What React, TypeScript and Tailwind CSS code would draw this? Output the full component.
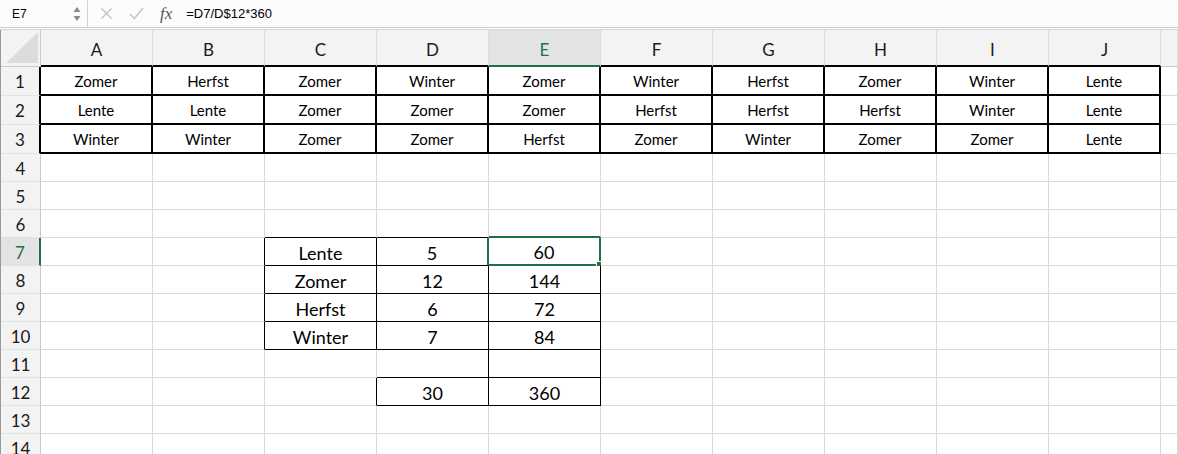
import React from "react";

const COLS = ["A", "B", "C", "D", "E", "F", "G", "H", "I", "J"];
const ROW_COUNT = 14;

// cell values by address
const data: Record<string, string> = {
  A1: "Zomer", B1: "Herfst", C1: "Zomer", D1: "Winter", E1: "Zomer",
  F1: "Winter", G1: "Herfst", H1: "Zomer", I1: "Winter", J1: "Lente",
  A2: "Lente", B2: "Lente", C2: "Zomer", D2: "Zomer", E2: "Zomer",
  F2: "Herfst", G2: "Herfst", H2: "Herfst", I2: "Winter", J2: "Lente",
  A3: "Winter", B3: "Winter", C3: "Zomer", D3: "Zomer", E3: "Herfst",
  F3: "Zomer", G3: "Winter", H3: "Zomer", I3: "Zomer", J3: "Lente",
  C7: "Lente", D7: "5", E7: "60",
  C8: "Zomer", D8: "12", E8: "144",
  C9: "Herfst", D9: "6", E9: "72",
  C10: "Winter", D10: "7", E10: "84",
  D12: "30", E12: "360",
};

type Edge = "grid" | "head" | "sep" | "thin" | "thick" | "green";

const RIGHT: Record<Edge, string> = {
  grid: "border-r border-r-[#d9d9d9]",
  head: "border-r border-r-[#c9c9c9]",
  sep: "border-r border-r-[#dedede]",
  thin: "border-r border-r-black",
  thick: "border-r-2 border-r-black",
  green: "border-r-2 border-r-[#1e7145]",
};

const BOTTOM: Record<Edge, string> = {
  grid: "border-b border-b-[#d9d9d9]",
  head: "border-b border-b-[#c9c9c9]",
  sep: "border-b border-b-[#e2e2e2]",
  thin: "border-b border-b-black",
  thick: "border-b-2 border-b-black",
  green: "border-b-2 border-b-[#1e7145]",
};

// r: 0 = column header, 1..14 rows; c: 0 = row header, 1..10 = A..J, 11 = K
function rightEdge(r: number, c: number): Edge {
  if (r >= 1 && r <= 3 && c <= 10) return "thick";
  if (r === 0) return c === 0 ? "head" : "sep";
  if (r === 7 && c === 0) return "green";
  if (c === 0) return "head";
  if (r === 7 && (c === 4 || c === 5)) return "green";
  if (r >= 7 && r <= 10 && c >= 2 && c <= 5) return "thin";
  if (r === 11 && (c === 4 || c === 5)) return "thin";
  if (r === 12 && c >= 3 && c <= 5) return "thin";
  return "grid";
}

function bottomEdge(r: number, c: number): Edge {
  if (r === 0) {
    if (c === 5) return "green";
    if (c >= 1 && c <= 10) return "thick";
    return "head";
  }
  if (c === 0) return "sep";
  if (r >= 1 && r <= 3 && c <= 10) return "thick";
  if ((r === 6 || r === 7) && c === 5) return "green";
  if ((r === 6 || r === 7) && (c === 3 || c === 4)) return "thin";
  if (r >= 8 && r <= 10 && c >= 3 && c <= 5) return "thin";
  if ((r === 11 || r === 12) && (c === 4 || c === 5)) return "thin";
  return "grid";
}

function FormulaBar() {
  return (
    <div className="flex h-[28px] items-center border-b border-b-[#cdcdcd] bg-[#fcfcfc] font-['Liberation_Sans',Arial,sans-serif] text-black">
      <div className="flex h-full w-[88px] items-center justify-between border-r border-r-[#d4d4d4] pl-[12px] pr-[6px]">
        <span className="text-[12px]">E7</span>
        <svg width="8" height="16" viewBox="0 0 8 16">
          <path d="M4 1 L7.5 6 L0.5 6 Z" fill="#8a8a8a" />
          <path d="M4 15 L7.5 10 L0.5 10 Z" fill="#8a8a8a" />
        </svg>
      </div>
      <div className="ml-[12px] flex items-center gap-[16px]">
        <svg width="13" height="13" viewBox="0 0 13 13">
          <path d="M1.5 1.5 L11.5 11.5 M11.5 1.5 L1.5 11.5" stroke="#c3c3c3" strokeWidth="1.4" />
        </svg>
        <svg width="15" height="13" viewBox="0 0 15 13">
          <path d="M1 7 L5.5 11.5 L14 1" stroke="#c3c3c3" strokeWidth="1.4" fill="none" />
        </svg>
        <span className="font-['Liberation_Serif',serif] text-[17px] italic leading-none text-[#555]">
          fx
        </span>
      </div>
      <span className="ml-[14px] text-[13px]">=D7/D$12*360</span>
    </div>
  );
}

function Cell({ r, c }: { r: number; c: number }) {
  const border = `${RIGHT[rightEdge(r, c)]} ${BOTTOM[bottomEdge(r, c)]}`;

  if (r === 0) {
    if (c === 0) {
      return (
        <div className={`relative bg-[#f3f3f3] ${border}`}>
          <svg className="absolute bottom-[3px] right-[2px]" width="32" height="31" viewBox="0 0 32 31">
            <path d="M32 0 L32 31 L0 31 Z" fill="#dcdcdc" />
          </svg>
        </div>
      );
    }
    const selected = c === 5;
    return (
      <div
        className={`flex items-center justify-center pt-[4px] text-[17px] ${
          selected ? "bg-[#e3e3e3] text-[#1e7145]" : "bg-[#f3f3f3] text-[#1a1a1a]"
        } ${border}`}
      >
        {COLS[c - 1] ?? ""}
      </div>
    );
  }

  if (c === 0) {
    const selected = r === 7;
    return (
      <div
        className={`flex items-center justify-center pt-[2px] text-[17px] ${
          selected ? "bg-[#e3e3e3] text-[#1e7145]" : "bg-[#f3f3f3] text-[#1a1a1a]"
        } ${border}`}
      >
        {r}
      </div>
    );
  }

  const value = c <= 10 ? data[`${COLS[c - 1]}${r}`] : undefined;
  const small = r <= 3;
  return (
    <div
      className={`relative flex items-center justify-center bg-white text-black ${
        small ? "pt-[2px] text-[15px]" : "pt-[3px] text-[18px]"
      } ${border}`}
    >
      {value}
      {r === 7 && c === 5 && (
        <span className="absolute bottom-[-4px] right-[-4px] box-content h-[5px] w-[5px] border border-white bg-[#1e7145]" />
      )}
    </div>
  );
}

export default function App() {
  const rows = Array.from({ length: ROW_COUNT + 1 }, (_, i) => i);
  const cols = Array.from({ length: 12 }, (_, i) => i);

  return (
    <div className="h-[454px] w-[1178px] overflow-hidden bg-white font-['Lato','Noto_Sans',sans-serif]">
      <FormulaBar />
      <div className="h-[2px] border-b border-b-[#d6d6d6] bg-white" />
      <div className="grid grid-cols-[40px_repeat(10,112px)_1fr] grid-rows-[37px_repeat(3,29px)_repeat(11,28px)] border-l border-l-[#9a9a9a]">
        {rows.map((r) => cols.map((c) => <Cell key={`${r}-${c}`} r={r} c={c} />))}
      </div>
    </div>
  );
}
